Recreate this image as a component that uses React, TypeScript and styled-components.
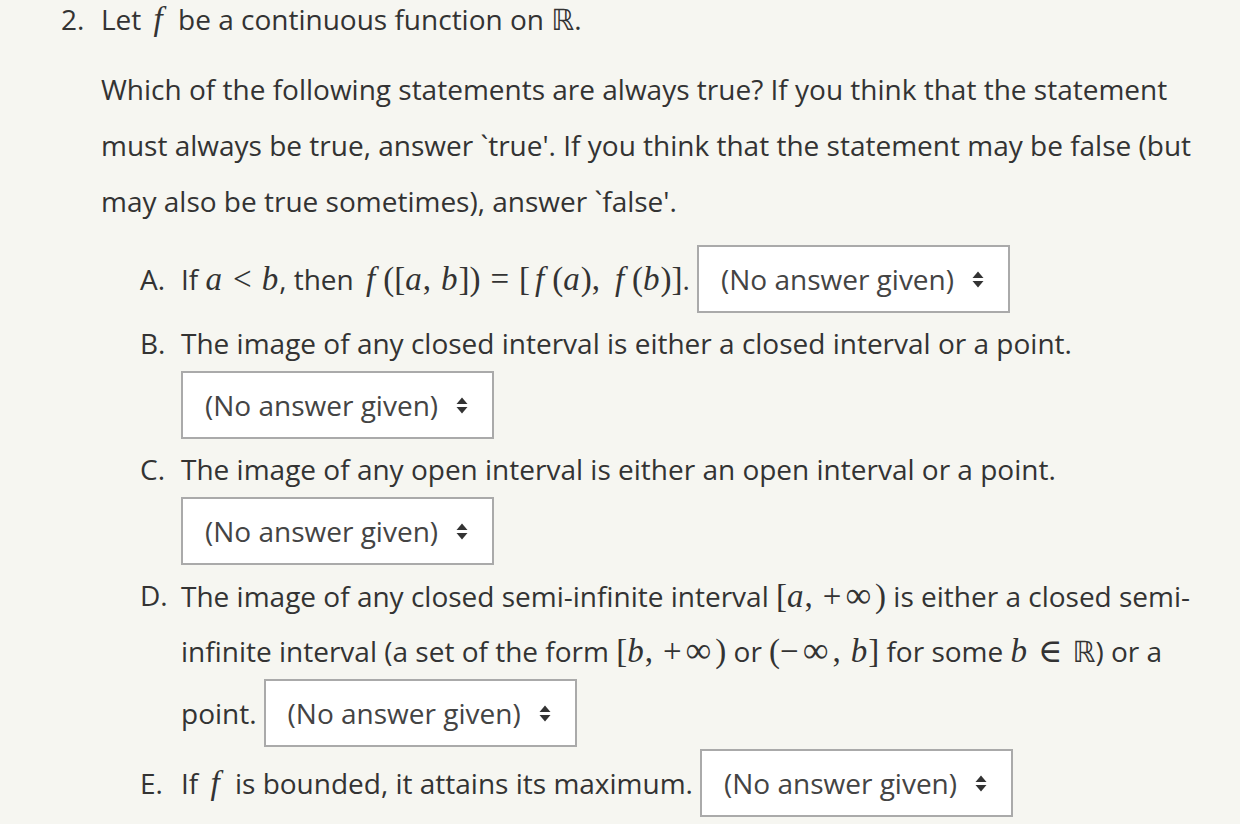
import styled, { createGlobalStyle } from 'styled-components';

const GlobalStyle = createGlobalStyle`
  html, body {
    margin: 0;
    background: #f6f6f1;
  }
  body {
    font-family: "Open Sans", "Noto Sans", sans-serif;
    color: #333;
  }
`;

const Page = styled.div`
  display: flex;
  padding-left: 61px;
  font-size: 28px;
`;

const Number = styled.div`
  flex: none;
  width: 40px;
  line-height: 38px;
`;

const Content = styled.div`
  display: flex;
  flex-direction: column;
`;

const Title = styled.div`
  line-height: 38px;
  white-space: nowrap;
`;

const Intro = styled.p`
  margin: 22px 0 0;
  line-height: 56px;
  white-space: nowrap;
`;

const List = styled.div`
  display: flex;
  flex-direction: column;
  margin: 16px 0 0 39px;
`;

const Row = styled.div<{ $tall?: boolean; $indent?: boolean }>`
  display: flex;
  align-items: center;
  height: ${({ $tall }) => ($tall ? 68 : 56)}px;
  margin-bottom: ${({ $tall }) => ($tall ? 2 : 0)}px;
  padding-left: ${({ $indent }) => ($indent ? 41 : 0)}px;
  line-height: 56px;
  white-space: nowrap;
`;

const Letter = styled.span`
  flex: none;
  width: 41px;
`;

const Text = styled.span`
  flex: none;
`;

const Var = styled.span<{ $f?: boolean }>`
  font-family: "Liberation Serif", "DejaVu Serif", serif;
  font-style: italic;
  font-size: 33px;
  padding-left: ${({ $f }) => ($f ? 5 : 0)}px;
  padding-right: ${({ $f }) => ($f ? 8 : 1)}px;
`;

const M = styled.span`
  font-family: "Liberation Serif", "DejaVu Serif", serif;
  font-size: 33px;
`;

const Comma = styled(M)`
  margin-right: 10px;
`;

const Rel = styled(M)`
  margin: 0 10px;
`;

const Inf = styled(M)`
  font-size: 36px;
  padding: 0 4px;
`;

const Bb = styled.span`
  font-family: "DejaVu Sans", "DejaVu Serif", sans-serif;
  font-size: 29px;
`;

const SelectBox = styled.div<{ $after?: boolean }>`
  box-sizing: border-box;
  flex: none;
  display: flex;
  align-items: center;
  gap: 18px;
  width: 313px;
  height: 68px;
  margin-left: ${({ $after }) => ($after ? 7 : 0)}px;
  padding: 0 22px;
  border: 2px solid #aaaaaa;
  background: #fff;
  color: #444;
  font-size: 28px;
  line-height: 1;
`;

function Arrows() {
  return (
    <svg width="12" height="17" viewBox="0 0 12 17" aria-hidden="true">
      <path d="M6 0.5 L11.5 7 H0.5 Z" fill="#333" />
      <path d="M6 16.5 L11.5 10 H0.5 Z" fill="#333" />
    </svg>
  );
}

function Select({ after }: { after?: boolean }) {
  return (
    <SelectBox $after={after}>
      <span>(No answer given)</span>
      <Arrows />
    </SelectBox>
  );
}

export default function App() {
  return (
    <>
      <GlobalStyle />
      <Page>
        <Number>2.</Number>
        <Content>
          <Title>
            Let <Var $f>f</Var> be a continuous function on <Bb>ℝ</Bb>.
          </Title>
          <Intro>
            Which of the following statements are always true? If you think that the statement
            <br />
            must always be true, answer `true'. If you think that the statement may be false (but
            <br />
            may also be true sometimes), answer `false'.
          </Intro>
          <List>
            <Row $tall>
              <Letter>A.</Letter>
              <Text>
                If <Var>a</Var>
                <Rel>&lt;</Rel>
                <Var>b</Var>, then <Var $f>f</Var>
                <M>([</M>
                <Var>a</Var>
                <Comma>,</Comma>
                <Var>b</Var>
                <M>])</M>
                <Rel>=</Rel>
                <M>[</M>
                <Var $f>f</Var>
                <M>(</M>
                <Var>a</Var>
                <M>)</M>
                <Comma>,</Comma>
                <Var $f>f</Var>
                <M>(</M>
                <Var>b</Var>
                <M>)]</M>.
              </Text>
              <Select after />
            </Row>

            <Row>
              <Letter>B.</Letter>
              <Text>The image of any closed interval is either a closed interval or a point.</Text>
            </Row>
            <Row $tall $indent>
              <Select />
            </Row>

            <Row>
              <Letter>C.</Letter>
              <Text>The image of any open interval is either an open interval or a point.</Text>
            </Row>
            <Row $tall $indent>
              <Select />
            </Row>

            <Row>
              <Letter>D.</Letter>
              <Text>
                The image of any closed semi-infinite interval <M>[</M>
                <Var>a</Var>
                <Comma>,</Comma>
                <M>+</M>
                <Inf>∞</Inf>
                <M>)</M> is either a closed semi-
              </Text>
            </Row>
            <Row $indent>
              <Text>
                infinite interval (a set of the form <M>[</M>
                <Var>b</Var>
                <Comma>,</Comma>
                <M>+</M>
                <Inf>∞</Inf>
                <M>)</M> or <M>(−</M>
                <Inf>∞</Inf>
                <Comma>,</Comma>
                <Var>b</Var>
                <M>]</M> for some <Var>b</Var>
                <Rel>∈</Rel>
                <Bb>ℝ</Bb>) or a
              </Text>
            </Row>
            <Row $tall $indent>
              <Text>point.</Text>
              <Select after />
            </Row>

            <Row $tall>
              <Letter>E.</Letter>
              <Text>
                If <Var $f>f</Var> is bounded, it attains its maximum.
              </Text>
              <Select after />
            </Row>
          </List>
        </Content>
      </Page>
    </>
  );
}
